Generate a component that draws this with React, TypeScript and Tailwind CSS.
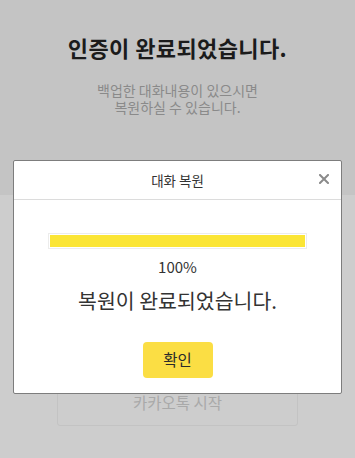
import React from "react";

const font = { fontFamily: '"Noto Sans CJK KR", "Noto Sans", sans-serif' };

export default function App() {
  return (
    <div className="relative w-[355px] h-[458px] overflow-hidden bg-[#cdcdcd]" style={font}>
      {/* Page behind the dim layer */}
      <div className="h-[195px] bg-[#c4c4c4] flex flex-col items-center pt-[32px]">
        <h1 className="text-[22px] leading-[30px] font-bold text-[#1b1b1b] tracking-[0.4px]">
          인증이 완료되었습니다.
        </h1>
        <div className="mt-[20px] flex flex-col items-center text-[14px] leading-[17px] text-[#8a8a8a]">
          <p>백업한 대화내용이 있으시면</p>
          <p>복원하실 수 있습니다.</p>
        </div>
      </div>
      <div className="flex justify-center pt-[184px]">
        <div className="w-[241px] h-[47px] rounded-[3px] border border-[#c3c3c3] flex items-center justify-center text-[15.5px] text-[#a9a9a9]">
          카카오톡 시작
        </div>
      </div>

      {/* Restore dialog */}
      <div className="absolute left-[13px] top-[160px] w-[329px] h-[234px] bg-white border border-[#7d7d7d] rounded-[2px] flex flex-col">
        <div className="relative h-[39px] border-b border-[#dcdcdc] flex items-center justify-center">
          <span className="text-[13.5px] text-[#333]">대화 복원</span>
          <button className="absolute right-[12px] top-[13px] w-[10px] h-[10px]">
            <svg viewBox="0 0 10 10" className="w-[10px] h-[10px]">
              <path d="M1 1 L9 9 M9 1 L1 9" stroke="#8a8a8a" strokeWidth="2" strokeLinecap="square" />
            </svg>
          </button>
        </div>
        <div className="flex flex-col items-center pt-[33px]">
          <div className="w-[259px] h-[16px] border border-[#ececec] p-[1px] bg-white">
            <div className="h-full bg-[#fbe535]" style={{ width: "100%" }} />
          </div>
          <div className="mt-[8px] text-[15px] leading-[20px] text-[#333]">100%</div>
          <div className="mt-[10px] text-[20.5px] leading-[26px] text-[#333]">복원이 완료되었습니다.</div>
          <button className="mt-[29px] w-[70px] h-[36px] rounded-[4px] bg-[#fbde44] text-[15.5px] text-[#2a2a2a]">
            확인
          </button>
        </div>
      </div>
    </div>
  );
}
